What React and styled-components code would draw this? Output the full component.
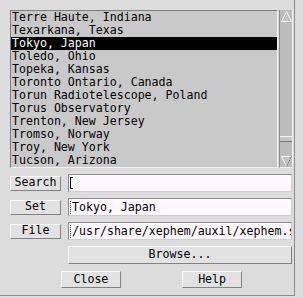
import React from 'react';
import styled, { createGlobalStyle } from 'styled-components';

const GlobalStyle = createGlobalStyle`
  html, body {
    margin: 0;
    padding: 0;
    background: #dcdcdc;
  }
  body {
    font-family: "DejaVu Sans Mono", "Liberation Mono", monospace;
    font-size: 11.6px;
    color: #000;
  }
`;

const sites = [
  'Terre Haute, Indiana',
  'Texarkana, Texas',
  'Tokyo, Japan',
  'Toledo, Ohio',
  'Topeka, Kansas',
  'Toronto Ontario, Canada',
  'Torun Radiotelescope, Poland',
  'Torus Observatory',
  'Trenton, New Jersey',
  'Tromso, Norway',
  'Troy, New York',
  'Tucson, Arizona',
];

const Dialog = styled.div`
  box-sizing: border-box;
  width: 295px;
  height: 296px;
  padding: 10px 1px 0 10px;
  border-right: 1px solid #8c8c8c;
  border-bottom: 1px solid #8c8c8c;
  display: flex;
  flex-direction: column;
`;

const ScrolledList = styled.div`
  display: flex;
  height: 158px;
  width: 283px;
`;

const ListBox = styled.div`
  box-sizing: border-box;
  flex: 1;
  background: #c9c9c9;
  border-top: 1px solid #7c7c7c;
  border-left: 1px solid #7c7c7c;
  border-bottom: 1px solid #f2f2f2;
  border-right: 1px solid #f2f2f2;
  overflow: hidden;
`;

const ListRow = styled.div`
  height: 13px;
  line-height: 13px;
  padding-left: 1px;
  white-space: nowrap;
  background: ${(p) => (p.$selected ? '#000' : 'transparent')};
  color: ${(p) => (p.$selected ? '#fff' : '#000')};
`;

const ScrollBar = styled.div`
  box-sizing: border-box;
  width: 14px;
  margin-left: 1px;
  background: #bcbcbc;
  border-left: 1px solid #8a8a8a;
  border-right: 1px solid #f2f2f2;
  border-bottom: 1px solid #f2f2f2;
  display: flex;
  flex-direction: column;
  align-items: center;
  padding-top: 1px;
`;

const Track = styled.div`
  position: relative;
  flex: 1;
  width: 100%;
`;

const Thumb = styled.div`
  position: absolute;
  left: 0;
  right: 0;
  height: 4px;
  background: #c6c6c6;
  border-top: 1px solid #f4f4f4;
  border-bottom: 1px solid #7a7a7a;
`;

const Form = styled.div`
  margin-top: 6px;
  display: grid;
  grid-template-columns: 51px 224px;
  column-gap: 7px;
  row-gap: 6px;
  align-items: center;
`;

const Button = styled.div`
  box-sizing: border-box;
  height: ${(p) => p.$h || 15}px;
  background: #e2e2e2;
  border-top: 1px solid #fafafa;
  border-left: 1px solid #fafafa;
  border-bottom: 1px solid #828282;
  border-right: 1px solid #828282;
  display: flex;
  align-items: center;
  justify-content: center;
  line-height: 1;
  white-space: nowrap;
`;

const Field = styled.div`
  box-sizing: border-box;
  height: 18px;
  background: #fff8fc;
  border-top: 1px solid #8a8a8a;
  border-left: 1px solid #8a8a8a;
  border-bottom: 1px solid #cfcfcf;
  border-right: 1px solid #cfcfcf;
  display: flex;
  align-items: center;
  padding-left: 1px;
  white-space: nowrap;
  overflow: hidden;
`;

const IBeam = styled.span`
  display: inline-block;
  width: 3px;
  height: 12px;
  border-left: 1px solid #000;
  border-top: 1px solid #000;
  border-bottom: 1px solid #000;
  box-sizing: border-box;
`;

const Caret = styled.span`
  display: inline-block;
  width: 0;
  height: 13px;
  border-left: 1px dotted #555;
  margin-right: 1px;
`;

const Spacer = styled.div``;

const Footer = styled.div`
  margin-top: 7px;
  margin-left: -10px;
  width: 303px;
  display: grid;
  grid-template-columns: repeat(5, 1fr);
`;

const FooterButton = styled(Button)`
  grid-column: ${(p) => p.$col};
`;

function UpArrow() {
  return (
    <svg width="11" height="11" viewBox="0 0 11 11">
      <polygon points="5.5,0.5 0.5,10.5 10.5,10.5" fill="#c2c2c2" />
      <polyline points="0.5,10.5 5.5,0.5" stroke="#fafafa" fill="none" />
      <polyline points="5.5,0.5 10.5,10.5 0.5,10.5" stroke="#f0f0f0" fill="none" />
    </svg>
  );
}

function DownArrow() {
  return (
    <svg width="11" height="11" viewBox="0 0 11 11">
      <polygon points="0.5,0.5 10.5,0.5 5.5,10.5" fill="#c2c2c2" />
      <polyline points="0.5,0.5 10.5,0.5" stroke="#fafafa" fill="none" />
      <polyline points="0.5,0.5 5.5,10.5" stroke="#f0f0f0" fill="none" />
      <polyline points="10.5,0.5 5.5,10.5" stroke="#6a6a6a" strokeDasharray="1 1" fill="none" />
    </svg>
  );
}

export default function App() {
  const selected = 2;
  const scrollFraction = 0.85;
  return (
    <>
      <GlobalStyle />
      <Dialog>
        <ScrolledList>
          <ListBox>
            {sites.map((s, i) => (
              <ListRow key={s} $selected={i === selected}>{s}</ListRow>
            ))}
          </ListBox>
          <ScrollBar>
            <UpArrow />
            <Track>
              <Thumb style={{ top: `${scrollFraction * 100}%` }} />
            </Track>
            <DownArrow />
          </ScrollBar>
        </ScrolledList>
        <Form>
          <Button>Search</Button>
          <Field><IBeam /></Field>
          <Button>Set</Button>
          <Field><Caret />Tokyo, Japan</Field>
          <Button>File</Button>
          <Field><Caret />/usr/share/xephem/auxil/xephem.s</Field>
          <Spacer />
          <Button $h={18}>Browse...</Button>
        </Form>
        <Footer>
          <FooterButton $col={2} $h={17}>Close</FooterButton>
          <FooterButton $col={4} $h={17}>Help</FooterButton>
        </Footer>
      </Dialog>
    </>
  );
}
